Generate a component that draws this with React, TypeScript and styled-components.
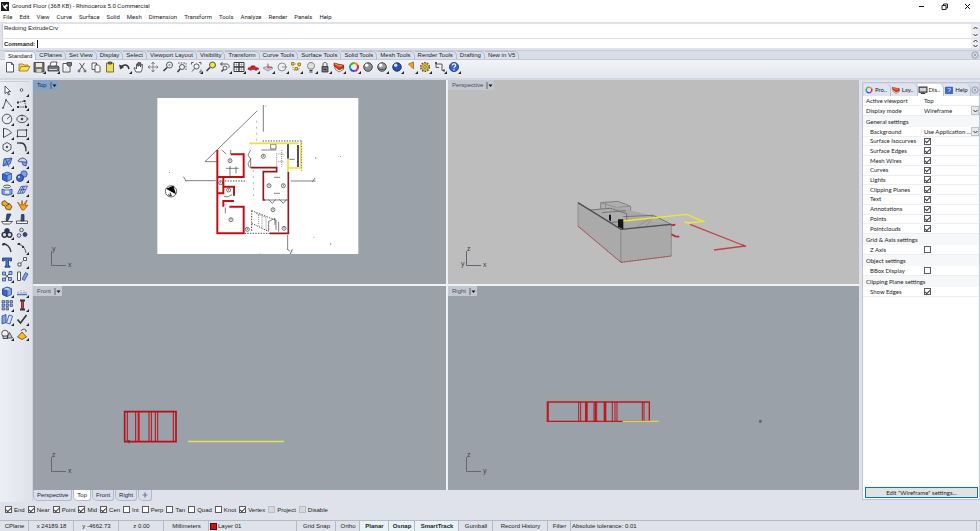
import React from "react";
import styled, { createGlobalStyle, css } from "styled-components";

const GlobalStyle = createGlobalStyle`
  * { box-sizing: border-box; }
  body { margin: 0; background: #dfe2ea; }
  button, input, select { font: inherit; color: inherit; margin: 0; padding: 0; }
  svg { display: block; }
`;

const ui = css`font-family: Roboto, "Open Sans", sans-serif;`;
const small = css`font-family: "Liberation Sans", Arial, sans-serif;`;

const Window = styled.div`
  display: flex;
  flex-direction: column;
  min-height: 100vh;
  background: #dfe2ea;
  color: #1c1c22;
  font-size: 6px;
  line-height: 8px;
  white-space: nowrap;
  overflow: hidden;
  ${small}
`;

/* ---------- title, menu, command line ---------- */

const TitleBar = styled.header`
  display: flex;
  align-items: center;
  height: 12px;
  padding: 0 3px 0 1px;
  gap: 3px;
  background: #fff;
  ${ui}
`;
const Title = styled.h1`
  flex: 1;
  margin: 0;
  font-size: 6px;
  font-weight: 400;
`;
const CaptionButton = styled.button`
  width: 20px;
  height: 11px;
  border: 0;
  background: none;
  display: grid;
  place-items: center;
`;
const MenuBar = styled.nav`
  display: flex;
  align-items: center;
  height: 10px;
  padding-left: 3px;
  gap: 7px;
  background: #fff;
  ${ui}
`;
const MenuItem = styled.button`
  border: 0;
  background: none;
  line-height: 8px;
`;
const CommandArea = styled.section`
  display: flex;
  flex-direction: column;
  height: 28px;
  padding: 2px 1px 2px 2px;
  gap: 1px;
`;
const CommandRow = styled.div<{ $tall?: boolean }>`
  display: flex;
  align-items: ${(p) => (p.$tall ? "flex-start" : "center")};
  height: ${(p) => (p.$tall ? "14px" : "9px")};
  padding-left: 1px;
  background: #fff;
  border: solid #cdd0d9;
  border-width: 0 0 0 1px;
`;
const CommandLabel = styled.label`
  font-weight: 700;
  margin-right: 2px;
`;
const CommandInput = styled.input`
  flex: 1;
  min-width: 0;
  height: 8px;
  border: 0;
  border-left: 1px solid #111;
  outline: 0;
  background: transparent;
`;
const History = styled.div`flex: 1;`;
const Spinner = styled.div`
  width: 8px;
  align-self: stretch;
  background: #eceef2;
  display: grid;
  place-items: center;
`;

/* ---------- toolbars ---------- */

const TabBar = styled.div`
  display: flex;
  align-items: flex-end;
  height: 10px;
  padding: 0 1px 0 5px;
  background: #d9dde8;
  border-top: 1px solid #c6cad6;
  border-bottom: 1px solid #c3c8d6;
`;
const ToolTab = styled.button<{ $on?: boolean }>`
  height: ${(p) => (p.$on ? "9px" : "8px")};
  margin-bottom: ${(p) => (p.$on ? "-1px" : "0")};
  padding: 0 3px;
  border: solid #b5bccd;
  border-width: 1px 1px 0 0;
  border-radius: 0 5px 0 0;
  background: ${(p) => (p.$on ? "#f7f8fb" : "#dbe0ed")};
  line-height: 7px;
`;
const Push = styled.div`margin-left: auto;`;
const ToolBar = styled.div`
  height: 20px;
  padding: 0 3px;
  background: linear-gradient(#f1f3f7, #e3e6ed);
  border-bottom: 2px solid #d3d7e2;
`;
const ToolGrid = styled.div`
  display: grid;
  grid-template-columns: repeat(32, 1fr);
  width: 458px;
`;
const ToolButton = styled.button`
  display: grid;
  place-items: center;
  min-width: 0;
  min-height: 0;
  border: 0;
  background: none;
`;
const Body = styled.main`
  display: flex;
  flex: 1;
`;
const SideBar = styled.aside`
  width: 33px;
  padding: 1px 3px 0 0;
  background: linear-gradient(90deg, #eceff4, #dfe2ea);
  border-right: 1px solid #d0d4df;
`;
const SideGrid = styled.div`
  display: grid;
  grid-template-columns: 1fr 1fr;
  grid-template-rows: repeat(18, 1fr);
  height: 260px;
  padding-top: 1px;
  border-top: 1px solid #c9cdd8;
`;

/* ---------- viewports ---------- */

const Center = styled.div`
  display: flex;
  flex-direction: column;
  flex: 1;
  min-width: 0;
`;
const ViewGrid = styled.div`
  display: grid;
  grid-template-columns: 413fr 411fr;
  grid-template-rows: 1fr 1fr;
  gap: 2px;
  flex: 1;
  background: #eef1f6;
`;
const View = styled.section<{ $bg: string }>`
  position: relative;
  min-width: 0;
  min-height: 0;
  background: ${(p) => p.$bg};
`;
const Scene = styled.svg`
  position: absolute;
  inset: 0;
  width: 100%;
  height: 100%;
`;
const AxisMark = styled.svg`
  position: absolute;
  left: 11px;
  bottom: 14px;
  font-size: 7px;
`;
const ViewLabel = styled.button<{ $on?: boolean }>`
  position: relative;
  display: flex;
  align-items: center;
  gap: 3px;
  height: 10px;
  padding: 0 1px 0 4px;
  border: 0;
  background: ${(p) => (p.$on ? "#84a3c8" : "#c3c8d0")};
  color: ${(p) => (p.$on ? "#16233a" : "#4a4e57")};
`;
const ViewTabs = styled.div`
  display: flex;
  height: 12px;
  padding-bottom: 1px;
  gap: 1px;
`;
const ViewTab = styled.button<{ $on?: boolean }>`
  height: 11px;
  padding: 0 3px;
  border: solid #b3b9c9;
  border-width: 0 1px 1px;
  border-radius: 0 0 3px 5px;
  background: ${(p) => (p.$on ? "#fff" : "#d8deee")};
`;

/* ---------- right panel ---------- */

const Panel = styled.aside`
  display: flex;
  flex-direction: column;
  width: 118px;
  margin: 2px 0 2px 3px;
  border: 1px solid #c0c5d2;
  font-family: Lato, "Liberation Sans", sans-serif;
`;
const PanelTabs = styled.div`
  display: flex;
  align-items: center;
  height: 13px;
  padding-left: 1px;
  background: #d5dbe9;
`;
const PanelTab = styled.button<{ $on?: boolean }>`
  display: flex;
  align-items: center;
  gap: 1px;
  flex: 1;
  height: 12px;
  border: 0;
  border-right: 1px solid #b9c0d2;
  border-radius: 0 5px 0 0;
  background: ${(p) => (p.$on ? "#fff" : "#dfe4f0")};
`;
const PanelBody = styled.div`
  display: flex;
  flex-direction: column;
  flex: 1;
  background: #fff;
  padding-bottom: 1px;
`;
const Group = styled.div<{ $h: number }>`
  display: grid;
  grid-auto-rows: 1fr;
  height: ${(p) => p.$h}px;
`;
const GroupTitle = styled.h2`
  margin: 0;
  height: 11px;
  padding-left: 3px;
  font-size: 6px;
  font-weight: 400;
  line-height: 11px;
  background: #f6f7f9;
`;
const Prop = styled.label<{ $indent?: boolean }>`
  display: grid;
  align-items: center;
  min-height: 0;
  min-width: 0;
  padding-left: ${(p) => (p.$indent ? "7px" : "3px")};
  grid-template-columns: ${(p) => (p.$indent ? "54px" : "58px")} minmax(0, 1fr);
  border-bottom: 1px solid #eceef1;
`;
const SelectBox = styled.span`
  display: flex;
  align-items: center;
  min-width: 0;
`;
const Select = styled.select`
  appearance: none;
  flex: 1;
  width: 0;
  min-width: 0;
  height: 8px;
  border: 0;
  border-radius: 0;
  background: none;
`;
const DropMark = styled.span`
  display: grid;
  place-items: center;
  flex: none;
  width: 8px;
  height: 9px;
  border: 1px solid #bfc3ca;
  background: #e6e8ec;
`;
const Check = styled.input`
  appearance: none;
  display: grid;
  place-content: center;
  width: 7px;
  height: 7px;
  border: 1px solid #5a5c62;
  background: #fff;
  &:checked::after {
    content: "";
    width: 2px;
    height: 4px;
    margin-bottom: 1px;
    border: solid #3a3c42;
    border-width: 0 1px 1px 0;
    transform: rotate(45deg);
  }
  &:disabled { border-color: #b9bcc3; background: #d6d8dc; }
`;
const Grow = styled.div`flex: 1;`;
const EditButton = styled.button`
  height: 11px;
  margin: 0 1px 0 2px;
  border: 1px solid #0a74c4;
  background: #e1e2e4;
  line-height: 8px;
`;

/* ---------- osnap and status bar ---------- */

const Osnap = styled.div`
  display: flex;
  align-items: center;
  height: 18px;
  padding: 0 0 3px 5px;
  gap: 3px;
`;
const Snap = styled.label`
  display: flex;
  align-items: center;
  gap: 2px;
`;
const StatusBar = styled.footer`
  display: flex;
  height: 11px;
  padding-right: 3px;
  border-top: 1px solid #b5bac4;
`;
const Cell = styled.button<{ $w?: number; $bold?: boolean; $left?: boolean }>`
  display: flex;
  align-items: center;
  justify-content: ${(p) => (p.$left ? "flex-start" : "center")};
  gap: 1px;
  ${(p) => (p.$w ? `width: ${p.$w}px;` : "flex: 1;")}
  padding-left: 1px;
  border: 0;
  border-right: 1px solid #b5bac4;
  background: ${(p) => (p.$bold ? "#e8f3f7" : "none")};
  font-weight: ${(p) => (p.$bold ? 700 : 400)};
`;
const Swatch = styled.span`
  width: 7px;
  height: 7px;
  border: 1px solid #4c0d0d;
  background: #dc0a0a;
`;

/* ---------- icons, all on a 14 unit square ---------- */

const K = "#33353b";
const B = "#2b4a9c";
const L = "#7fa2e6";

const Icon = ({ children, fly, size = 14 }: { children: React.ReactNode; fly?: boolean; size?: number }) => (
  <svg width={size} height={size} viewBox="0 0 14 14" fill="none" stroke={K} strokeWidth="0.8">
    {children}
    {fly && <path d="M14 11V14h-3z" fill="#222" stroke="none" />}
  </svg>
);

const Ball = ({ c, hi }: { c: string; hi: string }) => (
  <>
    <circle cx="7" cy="7" r="4.3" fill={c} stroke="#24262c" />
    <circle cx="5.7" cy="5.2" r="1.7" fill={hi} stroke="none" />
  </>
);

const Wheel = () => (
  <g strokeWidth="2">
    <path d="M7 3a4 4 0 0 1 3.5 2" stroke="#f08a1c" />
    <path d="M10.5 5a4 4 0 0 1 0 4" stroke="#e02438" />
    <path d="M10.5 9A4 4 0 0 1 7 11" stroke="#b02cc0" />
    <path d="M7 11a4 4 0 0 1-3.5-2" stroke="#2850d8" />
    <path d="M3.5 9a4 4 0 0 1 0-4" stroke="#18a890" />
    <path d="M3.5 5A4 4 0 0 1 7 3" stroke="#40b428" />
  </g>
);

const Layer = () => (
  <>
    <path d="M3 6.500V9l4 3 4.500-2.500V6z" fill="#fafafa" strokeWidth=".6" />
    <path d="M2 3v3l5 4 4.500-2V5L8 4.500z" fill="#d9341c" stroke="#7a1a10" strokeWidth=".6" />
    <path d="M3 3.800l4 2.400 3-.7" stroke="#f2a13a" strokeWidth="1.200" />
  </>
);

const Lens = ({ fill = "none" }: { fill?: string }) => (
  <>
    <circle cx="8.5" cy="5" r="3" fill={fill} />
    <path d="M6 7.5L2.5 11" strokeWidth="1.5" />
  </>
);

const mainTools: [string, React.ReactNode, boolean?][] = [
  ["New", <path d="M3.500 2.500h5l2 2v7.500h-7zM8.500 2.500v2h2" fill="#fff" />],
  ["Open", <><path d="M2 11V4h4l1 1h4v2" fill="#f5d873" stroke="#9a7410" /><path d="M2 11l2-4.500h9L10.500 11z" fill="#fbe14b" stroke="#9a7410" /></>],
  ["Save", <><path d="M2 2.500h10v9.500H2z" fill="#74775f" /><path d="M4 3h6v4H4z" fill="#e9ebe4" stroke="none" /><path d="M4.500 9h5v3h-5z" fill="#d4d4c4" stroke="none" /></>, true],
  ["Print", <><path d="M4 6l1-4h6l-1 4" fill="#fff" /><path d="M2 6h10l1 1v4H2z" fill="#70747c" /><path d="M3 9.500h8" stroke="#eee" /></>, true],
  ["Document properties", <><path d="M3 3.500h7v8.500H3z" fill="#fff" /><path d="M7 2.500h4.500v3L9 6.500 7 5z" fill="#777b84" /><path d="M4.500 8h4M4.500 10h4" stroke="#ccc" /></>],
  ["Cut", <><path d="M4.500 3l5 7M9.500 3l-5 7" /><circle cx="4" cy="11" r="1" /><circle cx="10" cy="11" r="1" /></>],
  ["Copy", <><path d="M3 3h4.500v6.500H3z" fill="#fff" /><path d="M6 5h3.500l1.500 1.500V12H6z" fill="#fff" /></>],
  ["Paste", <><path d="M3.500 3h7v9h-7z" fill="#f2dd58" stroke="#5d5320" /><path d="M5.500 2h3v2h-3z" fill="#777" /></>],
  ["Undo", <><path d="M3 7c3-3 7-3 8 2" strokeWidth="1.500" /><path d="M1.500 5l1 4 3-2z" fill={K} /></>, true],
  ["Pan", <path d="M4 12L2 8l1-.5L4.500 9V4l1-.5.500 3V2.500h1V6l.5-3.500h1V7l1-3 1 .5-.5 5-1 2.500z" fill="#fff" />],
  ["Rotate view", <><path d="M7 2.500v9M2.500 7h9" stroke="#777" /><path d="M5.500 4L7 2l1.500 2M5.500 10L7 12l1.500-2M10.500 5.500L12 7l-1.500 1.500M4 5.500L2 7l2 1.500" stroke="#666" /></>],
  ["Zoom dynamic", <><Lens fill="#eef3f8" /><path d="M7.500 5h2" /></>],
  ["Zoom window", <><path d="M3 3h8v7" strokeDasharray="1.500 1.200" /><circle cx="7" cy="7" r="2.500" fill="#eef3f8" /><path d="M5 9l-2.500 3" strokeWidth="1.400" /></>],
  ["Zoom extents", <><circle cx="7.500" cy="6.500" r="2.600" fill="#eef3f8" /><path d="M5.500 8.500L3 11.500M2.500 4.500v-2h2M10 2.500h2v2M12 9.500V12h-2" /></>, true],
  ["Zoom selected", <Lens fill="#f3e33c" />],
  ["Undo view change", <><path d="M2.500 4h6c3 0 3 3 2 4M4.500 2l-2 2 2 2" /><circle cx="7" cy="8" r="2" /><path d="M5.500 9.500l-2 2" strokeWidth="1.400" /></>, true],
  ["Four viewports", <><path d="M2 2.500h10v9H2z" fill="#fff" strokeWidth="1" /><path d="M7 2.500v9M2 7h10" strokeWidth="1.300" /><path d="M4.500 2.500v9M9.500 2.500v9M2 4.700h10M2 9.300h10" strokeWidth=".3" /></>, true],
  ["Set view", <><path d="M2 8l2-.5 1.500-1.700h3L10 7.500l2.500.5v1.500H2z" fill="#d91c20" stroke="#a01418" strokeWidth=".5" /><path d="M3.500 10h2M9 10h2" strokeWidth="1" /></>, true],
  ["CPlane", <><path d="M2 8l5-2 5 2-5 3z" fill="#c9ccd2" stroke="#8a8d94" /><path d="M7 8V3.500M7 8l4-1" stroke="#a33" /></>, true],
  ["Object snap", <><circle cx="7" cy="7" r="4" stroke="#777" /><path d="M7 7h5" stroke="#777" /></>, true],
  ["Select points", <><path d="M4 4h6v6H4z" strokeDasharray="1 1" stroke="#a08020" /><g fill="#f6d21e" stroke="#8a6d10"><path d="M2.500 2.500h2.500v2.500H2.500zM9 3h2.500v2.500H9zM6 7.500h2.500V10H6z" /></g></>, true],
  ["Hide", <><path d="M5 9c-3-3-1-6.500 2-6.500S12 6 9 9z" fill="#e0e0dc" stroke="#666" /><path d="M5.500 10.500h3M5.500 12h3" strokeWidth="1.200" /></>, true],
  ["Lock", <><path d="M4 6.500h6V12H4z" fill="#6b6d70" /><path d="M5 6.500V4c0-2 4-2 4 0v2.500M6 9.500h2" /></>, true],
  ["Layers", <Layer />, true],
  ["Object color", <Wheel />, true],
  ["Shade", <Ball c="#8d9095" hi="#f4f4f4" />],
  ["Rendered", <><Ball c="#9a9da2" hi="#f8f8f8" /><path d="M3 8c2 2 6 2 8 0" /></>, true],
  ["Render", <Ball c="#2251b8" hi="#cfe0ff" />, true],
  ["Spotlight", <path d="M4.500 4l5-2v7z" fill="#eda629" stroke="#a85f12" />, true],
  ["Options", <><circle cx="7" cy="7" r="4.300" stroke="#6e5514" strokeWidth="1.500" strokeDasharray="1.700 1" /><circle cx="7" cy="7" r="3.300" fill="#ecc43e" stroke="#8a6a18" strokeWidth=".6" /><circle cx="7" cy="7" r="1.300" fill="#fff" stroke="#6e5514" /></>, true],
  ["Dimension", <><path d="M3 2.500v5h3M3 4h6v6.500h3" /><path d="M2 2h2v2H2zM10 9.500h2v2h-2z" fill="#555" stroke="none" /></>, true],
  ["Help", <><circle cx="7" cy="7" r="4.600" fill="#3763cc" stroke="#1b3484" /><path d="M5.300 5.500c.3-2.500 3.700-2 3.300 0C8.300 6.700 7 6.700 7 8.200M7 9.300v1.200" stroke="#fff" strokeWidth="1.200" /></>, true],
];

const Cube = ({ fly = true }: { fly?: boolean }) => (
  <>
    <path d="M2.500 5L7 3l4.500 1.500v6L7 12.500l-4.500-2z" fill={L} stroke={B} />
    <path d="M2.500 5L7 6.500V12.500l-4.500-2z" fill="#3a66c8" stroke={B} />
    {fly && <path d="M7 6.500l4.500-2" stroke={B} />}
  </>
);

const sideTools: [string, React.ReactNode, boolean?][] = [
  ["Select", <path d="M5 3v7.500l2-1.500 1.500 3 1-.5L8.200 8.500H10.500z" fill="#fff" />],
  ["Point", <circle cx="6.500" cy="7" r="1.300" fill="#fff" />, true],
  ["Polyline", <><path d="M3 11.500L6 3l6 7" /><path d="M2.300 10.800h1.400M5.300 3h1.400" strokeWidth="1.500" /></>, true],
  ["Control point curve", <><path d="M3 10h8l-1.500-6L3 5.500" strokeDasharray="1.500 .7" /><g fill={K} stroke="none"><path d="M2 9h2v2H2zM2 4.500h2v2H2zM8.500 3h2v2h-2zM10 9h2v2h-2z" /></g></>, true],
  ["Circle", <><circle cx="7" cy="7" r="4.800" /><path d="M7 7l3.500-3" /></>, true],
  ["Ellipse", <><ellipse cx="7" cy="7" rx="5.200" ry="3.600" /><circle cx="7" cy="7" r=".9" fill={K} /><path d="M7 2.500v2M12 7h1.500" /></>, true],
  ["Arc", <><path d="M3.500 2.500c4 0 6.500 2 8 4.500l-8 4.500z" /><path d="M3.500 2.500v9" /></>, true],
  ["Rectangle", <><path d="M2.500 4h9v6.500h-9z" /><path d="M1.700 9.700h1.600v1.600H1.700zM10.700 3.200h1.600v1.600h-1.600z" fill={K} stroke="none" /></>, true],
  ["Polygon", <><path d="M7 2.500l4 2.300v4.400l-4 2.300-4-2.300V4.800z" /><circle cx="7" cy="7" r=".8" fill={K} /></>, true],
  ["Fillet", <><path d="M2 3h4c4 0 5 3 5 8" strokeWidth="1.600" /><path d="M2 3h3M11 8v4" stroke="#8f9299" /></>, true],
  ["Surface from points", <><path d="M4 4l8-1-2 6-7 2z" fill={L} stroke={B} /><path d="M3 11l9-8M5 3l4 9" stroke={B} /></>, true],
  ["Revolve", <><path d="M3 6c2-4 8-4 9 1l-4 1c0-1.500-2-2-3-1z" fill="#c7d6f5" /><path d="M7 7l5 0-1 4-3-1z" fill={L} stroke={B} /></>, true],
  ["Box", <Cube />, true],
  ["Boolean union", <><circle cx="9" cy="5" r="3.200" fill={L} stroke={B} /><circle cx="5" cy="9" r="3.500" fill="#3a66c8" stroke="#1d3070" /><circle cx="4" cy="8" r="1" fill="#dbe6ff" stroke="none" /></>, true],
  ["Pipe", <><ellipse cx="7" cy="3.500" rx="3.500" ry="1.400" /><path d="M2 6c2 1.500 8 1.500 10 0v5c-2 1.500-8 1.500-10 0z" fill={L} stroke={B} /><path d="M5 7.500h4v3H5z" fill="#e2eafb" stroke="none" /></>, true],
  ["Mesh", <><path d="M2.500 10.500L6 3.500l6.500-.5L9 10z" fill="#cbd9f6" stroke={B} /><path d="M4.200 7l6.600-.5M7.300 10l2-6.500M5 10.200l3-7" stroke={B} /></>, true],
  ["Explode", <><path d="M2 4l3-1.500L7 5l3 1 2 3-2 3-4-1-1-3-3-1z" fill="#efa928" stroke="#5f3c08" /><path d="M6 8l3-2" /></>],
  ["Join", <path d="M7 12L2.500 4l3.500 3.500 1-5 1 5 4-5.500-2 6 3-1-4 5z" fill="#f4a51c" stroke="#b1560e" />],
  ["Trim", <><path d="M1.500 9.500h11l-3 2.500h-6z" fill="#fff" /><path d="M7 2h4L8 8.500H6z" fill="#284a9a" /></>],
  ["Split", <><path d="M1.500 9h11v2.500h-11z" fill="#fff" /><path d="M6.500 2.500h2.500V9H6z" fill="#284a9a" /></>],
  ["Group", <><circle cx="7" cy="4.800" r="2.400" fill="#22376e" /><circle cx="4.500" cy="8.800" r="2.400" fill="#cdd9f3" strokeWidth="1.400" /><circle cx="9.500" cy="8.800" r="2.400" fill="#cdd9f3" strokeWidth="1.400" /></>, true],
  ["Ungroup", <><circle cx="6.500" cy="4" r="1.800" fill="#dde6f8" /><circle cx="4" cy="9.500" r="1.800" fill="#dde6f8" /><circle cx="10" cy="8.500" r="2" fill={B} /></>],
  ["Edit curve", <><path d="M3 3c5 0 7 3 8 8" strokeWidth="1.300" /><path d="M2.200 3.800l3-1" strokeWidth="2" /></>],
  ["Edit points", <><path d="M2 3c5 1 8 3 9 9" /><path d="M4 2l4 3 3 5" stroke="#888" /><path d="M3 2h2v2H3zM7 5h2v2H7z" fill={K} stroke="none" /></>, true],
  ["Text", <path d="M2.500 3h9v3h-1.500l-.5-1H8.500v6h1.500v1.200H5V11h1V5H4.500L4 6H2.500z" fill="#4676d6" stroke="#1d3478" />],
  ["Move", <><path d="M3 8h3v3H3zM8.500 2.500h3v3h-3z" fill="#fff" /><path d="M6 8l3-3" strokeDasharray="1 1" /></>, true],
  ["Copy objects", <><path d="M2.500 3h3v3h-3zM9 2.500h3v3H9zM2.500 9h3v3h-3zM8.500 8.500h3v3h-3z" fill="#9fb8ec" stroke={B} /><path d="M5 5.500l4 3.500M9 5L5 9.500" /></>, true],
  ["Rotate", <><path d="M2.500 3h3v8.500h-3z" fill="#fff" /><path d="M7 10l3.500-6.500 2.500 1.500-3.500 6.500z" fill={L} stroke={B} /></>],
  ["Solid edit", <><Cube fly={false} /><path d="M3 5.500c3-3 6-2 8 0" fill="#dbe5fa" stroke={B} /></>, true],
  ["Drape", <><path d="M2 10.500h10" stroke="#4c73cf" strokeWidth="1.500" /><path d="M3 9V7M6 9V6M9 9V6.500M11 9V7.500" stroke="#777" strokeDasharray="1 .7" /></>, true],
  ["Array", <path d="M2 2.500h2.500V5H2zM6 2.500h2.500V5H6zM10 2.500h2.500V5H10zM2 6h2.500v2.500H2zM6 6h2.500v2.500H6zM10 6h2.500v2.500H10zM2 9.700h2.500V12H2zM6 9.700h2.500V12H6z" fill="#8ba6dc" stroke="#2a3c70" strokeWidth=".6" />, true],
  ["Deform", <><path d="M5 2.500h5M5 11.500h5" strokeWidth="2" /><path d="M6.500 3.500v7h2v-7z" fill="#d34040" stroke="#701a1a" /></>, true],
  ["Layout", <><path d="M2 4l4-1.500v8L2 12z" fill={L} stroke={B} /><path d="M6.500 11L9 3l3.500 1L10 12z" fill="#dce6fa" stroke={B} /></>, true],
  ["Check", <path d="M2.500 7.500l3 3.500L11.500 3" strokeWidth="1.600" />, true],
  ["Shapes", <><circle cx="5" cy="6.500" r="3.300" fill="#f2f2f2" /><path d="M7 11l2.500-5.500 3 5.500zM3 9h4.500v2.500H3z" fill="#c4c7cc" /></>, true],
  ["Curve pyramid", <><path d="M2.500 10l4.500-5 4.500 5L7 12.500z" fill="#f5b930" stroke="#6b4708" /><path d="M6 4c1-2 3-2.500 5-1v2" /></>, true],
];

const Chevron = ({ up }: { up?: boolean }) => (
  <svg width="5" height="4" viewBox="0 0 5 4" fill="none" stroke="#333" strokeWidth="1">
    <path d={up ? "M.5 3l2-2 2 2" : "M.5 1l2 2 2-2"} />
  </svg>
);

const CloseRing = () => (
  <svg width="8" height="8" viewBox="0 0 8 8" fill="none" stroke="#82869a" strokeWidth=".7">
    <circle cx="4" cy="4" r="3.200" />
    <path d="M2.800 2.800l2.400 2.400M5.200 2.800L2.800 5.200" />
  </svg>
);

/* ---------- scenes ---------- */

const Plan = () => (
  <Scene viewBox="33 80 413 204" preserveAspectRatio="xMinYMin meet" fill="none">
    <g transform="translate(150 90) scale(.33333)">
      <path fill="#fff" d="M22 24h603v468H22z" />
      <g stroke="#666" strokeWidth="2.500">
        <path d="M165 215L322 62M165 215h36M340 45v80M105 272h92M422 273h75M413 435v45M108 272l-8-12M487 276l8-12" />
        <path d="M320 92v60M310 240v85M345 50l8-6" strokeDasharray="6 12" stroke="#aaa" />
      </g>
      <g stroke="#444" strokeWidth="3">
        <path d="M338 153h115M225 273h65M284 430h75M305 362v60M305 362l75 30M305 400l50 24" strokeDasharray="4 4" />
        <path d="M318 370l30 12v38M326 375v32M336 380v36M380 190v45M395 180v50M385 192h16M385 215h16" strokeDasharray="3 3" stroke="#888" />
        <path d="M355 395l20-10v20M378 390v30M386 395v30M356 395v30M334 180h45M372 262h18M372 310h18M215 180l14 12M242 180v12M228 235h38M240 228v30M258 230v20M302 180l-8 15 8 12-8 14 4 12M302 205v28M355 328l12 12 10-12M388 328l12 12 10-12M222 320h12l12-6M226 352v18M418 208h16" strokeWidth="2" />
        <path d="M362 163h16v14h-16z" strokeWidth="2" />
        <path d="M345 330h68" strokeWidth="2" />
      </g>
      <g stroke="#be1117" strokeWidth="6">
        <path d="M202 180v250h79v-80h-43M242 193h39v68h-79M202 310h18v-48M218 290h34v27M252 333h-32v17" />
      </g>
      <g stroke="#8e1b22" strokeWidth="5">
        <path d="M302 233h78v12h-40v85h6M415 245v185h-56" />
      </g>
      <path d="M414 162v44M444 165v66" stroke="#333" strokeWidth="5" />
      <path d="M298 160h148M412 234h41v-80M414 206v40" stroke="#e8e23a" strokeWidth="5" />
      <path d="M455 152v90" stroke="#666" strokeWidth="3" strokeDasharray="3 5" />
      <g stroke="#333" strokeWidth="2">
        {[[240, 212], [340, 199], [212, 278], [236, 300], [357, 287], [400, 287], [369, 359], [243, 389], [402, 415], [292, 418]].map(([x, y]) => (
          <g key={`${x}-${y}`}><circle cx={x} cy={y} r="6" /><path d={`M${x} ${y - 4}v6`} /></g>
        ))}
      </g>
      <circle cx="63" cy="304" r="17" fill="#fff" stroke="#222" strokeWidth="2" />
      <path d="M48 296l22-9 8 26z" fill="#000" />
      <path d="M54 314l10 4-4-10" stroke="#222" strokeWidth="3" />
      <g fill="#999"><path d="M495 202h4v4h-4zM540 460h4v4h-4zM490 440h3v3h-3zM57 246h3v3h-3zM570 198h3v3h-3zM328 491h4v3h-4z" /></g>
      <path d="M414 478l5 6M427 478l-6 14" stroke="#444" strokeWidth="2.500" />
    </g>
  </Scene>
);

const Perspective = () => (
  <Scene viewBox="448 80 411 204" preserveAspectRatio="xMinYMin meet" fill="none">
    <g transform="translate(560 190) scale(.33333)" strokeWidth="2.500" stroke="#555">
      <path d="M122 38l52-4 38 15v28l-44 4-46-16z" fill="#aeaeae" stroke="#777" />
      <path d="M122 38l46 14 44-3M168 52v28M137 34v24" stroke="#888" />
      <path d="M100 58l70-6 110 25 54 26-151 15-70-45z" fill="#a8a8a8" stroke="none" />
      <path d="M90 60l60-5 50 16v22l-60 5zM125 68l72-6M190 80l90-4 54 27" fill="#adadad" stroke="#6a6a6a" />
      <path d="M280 78l-20 30M230 112l50-34" stroke="#8a8a8a" />
      <path d="M54 38l129 80v99L54 108z" fill="#aaa" stroke="#888" />
      <path d="M183 118l151-15v95l-151 19z" fill="#a9a9a9" stroke="#8a8a8a" />
      <path d="M54 38l129 80 151-15" stroke="#4e4e4e" strokeWidth="4" />
      <path d="M174 88h16v30l-16-8zM147 74h6v20l-6-4z" fill="#161616" stroke="none" />
      <path d="M54 109l129 108 151-19" stroke="#b9474c" strokeWidth="3" strokeDasharray="6 2" />
      <path d="M190 93l190-20 50 21-43 5-14-3" stroke="#efe82f" strokeWidth="4" />
      <path d="M390 103l165 65-93 12" stroke="#c24348" strokeWidth="4" />
      <path d="M546 164l12 6" stroke="#c24348" strokeWidth="4" />
      <path d="M334 106l12-2M334 133l12 6 12 1" stroke="#b42a30" strokeWidth="5" />
    </g>
  </Scene>
);

const Front = () => (
  <Scene viewBox="33 286 413 204" preserveAspectRatio="xMinYMin meet" fill="none">
    <g transform="translate(0 400) scale(.33333)" stroke="#b80f19" strokeWidth="3">
      <path d="M374 35h154v90H374z" strokeWidth="5" />
      <path d="M382 34v90M407 34v90M447 34v90M454 34v90M466 34v90M473 34v90M520 34v90" />
      <path d="M416 34v90" stroke="#d0141c" strokeWidth="6" />
      <path d="M564 124.500h288" stroke="#e4de62" strokeWidth="4" />
      <circle cx="387" cy="125" r="4" stroke="#555" />
    </g>
  </Scene>
);

const Right = () => (
  <Scene viewBox="448 286 411 204" preserveAspectRatio="xMinYMin meet" fill="none">
    <g transform="translate(320 400) scale(.33333)" stroke="#bd1821" strokeWidth="3">
      <path d="M682 6h306v58H682z" strokeWidth="4" />
      <path d="M685 6v58M776 6v58M782 6v58M822 6v58M830 6v58M877 6v58M885 6v58M891 6v58M967 6v58M972 6v58" />
      <path d="M799 6v58M855 6v58" strokeWidth="8" />
      <path d="M826 6v58" strokeWidth="5" />
      <path d="M908 64h108" stroke="#e8d04e" strokeWidth="4" />
      <path d="M1317 64h8M1321 60v8" stroke="#5d6168" strokeWidth="5" />
    </g>
  </Scene>
);

const Axes = ({ up, side, extra }: { up: string; side: string; extra?: string }) => (
  <AxisMark width="34" height="27" viewBox="0 0 34 27">
    <path d="M7.500 8v14.500H22" fill="none" stroke="#63676f" />
    <g fill="#3f434a">
      <text x="8" y="8">{up}</text>
      <text x="24" y="24">{side}</text>
      {extra && <text x="2" y="23">{extra}</text>}
    </g>
  </AxisMark>
);

const Label = ({ children, on }: { children: string; on?: boolean }) => (
  <ViewLabel $on={on}>
    {children}
    <svg width="7" height="9" viewBox="0 0 7 9"><path d="M1 1v7" stroke="#444" strokeWidth=".8" /><path d="M2.500 3.500h4l-2 2.500z" fill="#111" /></svg>
  </ViewLabel>
);

/* ---------- data ---------- */

const menus = "File Edit View Curve Surface Solid Mesh Dimension Transform Tools Analyze Render Panels Help".split(" ");
const tabs = ["Standard", "CPlanes", "Set View", "Display", "Select", "Viewport Layout", "Visibility", "Transform", "Curve Tools", "Surface Tools", "Solid Tools", "Mesh Tools", "Render Tools", "Drafting", "New in V5"];
const checks = ["Surface Isocurves", "Surface Edges", "Mesh Wires", "Curves", "Lights", "Clipping Planes", "Text", "Annotations", "Points", "Pointclouds"];
const snaps: [string, boolean, boolean?][] = [
  ["End", true], ["Near", true], ["Point", true], ["Mid", true], ["Cen", true], ["Int", false], ["Perp", false],
  ["Tan", false], ["Quad", false], ["Knot", false], ["Vertex", true], ["Project", false, true], ["Disable", false, true],
];

const CheckRow = ({ name, on }: { name: string; on: boolean }) => (
  <Prop $indent><span>{name}</span><Check type="checkbox" defaultChecked={on} /></Prop>
);

const SelectRow = ({ name, value, indent }: { name: string; value: string; indent?: boolean }) => (
  <Prop $indent={indent}>
    <span>{name}</span>
    <SelectBox>
      <Select defaultValue={value}><option>{value}</option></Select>
      <DropMark><Chevron /></DropMark>
    </SelectBox>
  </Prop>
);

export default function App() {
  return (
    <Window>
      <GlobalStyle />
      <TitleBar>
        <svg width="8" height="9" viewBox="0 0 8 9"><path d="M0 0h8v9H0z" fill="#181a1c" /><path d="M1 1l2 3 3-2 1 2-2 1 1 3-3-2-1-2z" fill="#fff" /></svg>
        <Title>Ground Floor (368 KB) - Rhinoceros 5.0 Commercial</Title>
        <CaptionButton aria-label="Minimize"><svg width="7" height="7" viewBox="0 0 7 7"><path d="M1 3.500h5" stroke="#111" /></svg></CaptionButton>
        <CaptionButton aria-label="Restore"><svg width="7" height="7" viewBox="0 0 7 7" fill="none" stroke="#111" strokeWidth=".9"><path d="M1 2.500h4v4H1zM2.500 2.500V1H6.500v4H5" /></svg></CaptionButton>
        <CaptionButton aria-label="Close"><svg width="7" height="7" viewBox="0 0 7 7"><path d="M1 1l5 5M6 1L1 6" stroke="#111" /></svg></CaptionButton>
      </TitleBar>
      <MenuBar>{menus.map((m) => <MenuItem key={m}>{m}</MenuItem>)}</MenuBar>
      <CommandArea>
        <CommandRow $tall>
          <History>Redoing ExtrudeCrv</History>
          <Spinner><Chevron up /><Chevron /></Spinner>
        </CommandRow>
        <CommandRow>
          <CommandLabel htmlFor="command">Command:</CommandLabel>
          <CommandInput id="command" />
          <Spinner><Chevron up /><Chevron /></Spinner>
        </CommandRow>
      </CommandArea>
      <TabBar>
        {tabs.map((t, i) => <ToolTab key={t} $on={i === 0}>{t}</ToolTab>)}
        <Push><CloseRing /></Push>
      </TabBar>
      <ToolBar>
        <ToolGrid>
          {mainTools.map(([name, art, fly]) => (
            <ToolButton key={name} aria-label={name}><Icon fly={fly}>{art}</Icon></ToolButton>
          ))}
        </ToolGrid>
      </ToolBar>
      <Body>
        <SideBar>
          <SideGrid>
            {sideTools.map(([name, art, fly]) => (
              <ToolButton key={name} aria-label={name}><Icon fly={fly}>{art}</Icon></ToolButton>
            ))}
          </SideGrid>
        </SideBar>
        <Center>
          <ViewGrid>
            <View $bg="#9ba1a9"><Plan /><Label on>Top</Label><Axes up="y" side="x" /></View>
            <View $bg="#bdbdbd"><Perspective /><Label>Perspective</Label><Axes up="z" side="x" extra="y" /></View>
            <View $bg="#9ba1a9"><Front /><Label>Front</Label><Axes up="z" side="x" /></View>
            <View $bg="#9ba1a9"><Right /><Label>Right</Label><Axes up="z" side="y" /></View>
          </ViewGrid>
          <ViewTabs>
            {["Perspective", "Top", "Front", "Right"].map((t) => <ViewTab key={t} $on={t === "Top"}>{t}</ViewTab>)}
            <ViewTab aria-label="New viewport"><svg width="6" height="6" viewBox="0 0 6 6"><path d="M3 .5v5M.5 3h5" stroke="#777b86" strokeWidth="1.200" /></svg></ViewTab>
          </ViewTabs>
        </Center>
        <Panel>
          <PanelTabs>
            <PanelTab><Icon size={10}><Wheel /></Icon>Pro..</PanelTab>
            <PanelTab><Icon size={10}><Layer /></Icon>Lay..</PanelTab>
            <PanelTab $on><Icon size={10}><path d="M1.500 3h11v7h-11zM4 12h6" fill="#cfd3d8" strokeWidth="1.500" /></Icon>Dis..</PanelTab>
            <PanelTab><Icon size={10}><path d="M2 3h10v9H2z" fill="#3e69cc" stroke="#223f8f" /><path d="M5 5h4v2L7 8v2" stroke="#fff" /></Icon>Help</PanelTab>
            <CloseRing />
          </PanelTabs>
          <PanelBody>
            <Group $h={20}>
              <Prop as="div"><span>Active viewport</span><span>Top</span></Prop>
              <SelectRow name="Display mode" value="Wireframe" />
            </Group>
            <GroupTitle>General settings</GroupTitle>
            <Group $h={107}>
              <SelectRow name="Background" value="Use Application ..." indent />
              {checks.map((c) => <CheckRow key={c} name={c} on />)}
            </Group>
            <GroupTitle>Grid &amp; Axis settings</GroupTitle>
            <Group $h={10}><CheckRow name="Z Axis" on={false} /></Group>
            <GroupTitle>Object settings</GroupTitle>
            <Group $h={10}><CheckRow name="BBox Display" on={false} /></Group>
            <GroupTitle>Clipping Plane settings</GroupTitle>
            <Group $h={10}><CheckRow name="Show Edges" on /></Group>
            <Grow />
            <EditButton>Edit "Wireframe" settings...</EditButton>
          </PanelBody>
        </Panel>
      </Body>
      <Osnap>
        {snaps.map(([name, on, off]) => (
          <Snap key={name}><Check type="checkbox" defaultChecked={on} disabled={off} />{name}</Snap>
        ))}
      </Osnap>
      <StatusBar>
        <Cell $w={29}>CPlane</Cell>
        <Cell $w={45}>x 24189.18</Cell>
        <Cell $w={45}>y -4662.73</Cell>
        <Cell $w={45}>z 0.00</Cell>
        <Cell $w={45}>Millimeters</Cell>
        <Cell $w={88} $left><Swatch />Layer 01</Cell>
        <Cell $w={39}>Grid Snap</Cell>
        <Cell $w={24}>Ortho</Cell>
        <Cell $w={29} $bold>Planar</Cell>
        <Cell $w={26} $bold>Osnap</Cell>
        <Cell $w={44} $bold>SmartTrack</Cell>
        <Cell $w={34}>Gumball</Cell>
        <Cell $w={55}>Record History</Cell>
        <Cell $w={23}>Filter</Cell>
        <Cell $left>Absolute tolerance: 0.01</Cell>
      </StatusBar>
    </Window>
  );
}
